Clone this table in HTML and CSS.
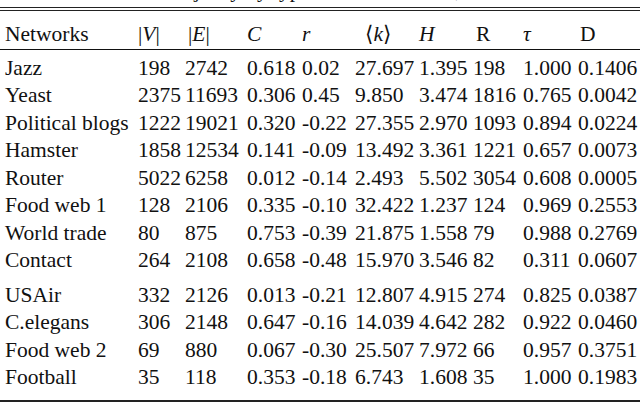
FILE: index.html
```html
<!DOCTYPE html>
<html>
<head>
<meta charset="utf-8">
<title>Networks</title>
<link rel="stylesheet" href="styles.css">
</head>
<body>
	<div class="caption"><p>Table 1: Basic majority by type of real networks, as used in the tests</p></div>
	<div class="toprule"></div>
	<table class="stats">
		<colgroup>
			<col class="c1"><col class="c2"><col class="c3"><col class="c4"><col class="c5">
			<col class="c6"><col class="c7"><col class="c8"><col class="c9"><col class="c10">
		</colgroup>
		<thead>
			<tr>
				<th>Networks</th>
				<th>|<i>V</i>|</th>
				<th class="e">|<i>E</i>|</th>
				<th><i>C</i></th>
				<th><i>r</i></th>
				<th class="k">&#10216;<i>k</i>&#10217;</th>
				<th><i>H</i></th>
				<th class="rr">R</th>
				<th><i>&tau;</i></th>
				<th class="d">D</th>
			</tr>
		</thead>
		<tbody class="grp1">
			<tr><td>Jazz</td><td>198</td><td>2742</td><td>0.618</td><td>0.02</td><td>27.697</td><td>1.395</td><td>198</td><td>1.000</td><td>0.1406</td></tr>
			<tr><td>Yeast</td><td>2375</td><td>11693</td><td>0.306</td><td>0.45</td><td>9.850</td><td>3.474</td><td>1816</td><td>0.765</td><td>0.0042</td></tr>
			<tr><td>Political blogs</td><td>1222</td><td>19021</td><td>0.320</td><td>-0.22</td><td>27.355</td><td>2.970</td><td>1093</td><td>0.894</td><td>0.0224</td></tr>
			<tr><td>Hamster</td><td>1858</td><td>12534</td><td>0.141</td><td>-0.09</td><td>13.492</td><td>3.361</td><td>1221</td><td>0.657</td><td>0.0073</td></tr>
			<tr><td>Router</td><td>5022</td><td>6258</td><td>0.012</td><td>-0.14</td><td>2.493</td><td>5.502</td><td>3054</td><td>0.608</td><td>0.0005</td></tr>
			<tr><td>Food web 1</td><td>128</td><td>2106</td><td>0.335</td><td>-0.10</td><td>32.422</td><td>1.237</td><td>124</td><td>0.969</td><td>0.2553</td></tr>
			<tr><td>World trade</td><td>80</td><td>875</td><td>0.753</td><td>-0.39</td><td>21.875</td><td>1.558</td><td>79</td><td>0.988</td><td>0.2769</td></tr>
			<tr><td>Contact</td><td>264</td><td>2108</td><td>0.658</td><td>-0.48</td><td>15.970</td><td>3.546</td><td>82</td><td>0.311</td><td>0.0607</td></tr>
		</tbody>
		<tbody class="grp2">
			<tr><td>USAir</td><td>332</td><td>2126</td><td>0.013</td><td>-0.21</td><td>12.807</td><td>4.915</td><td>274</td><td>0.825</td><td>0.0387</td></tr>
			<tr><td>C.elegans</td><td>306</td><td>2148</td><td>0.647</td><td>-0.16</td><td>14.039</td><td>4.642</td><td>282</td><td>0.922</td><td>0.0460</td></tr>
			<tr><td>Food web 2</td><td>69</td><td>880</td><td>0.067</td><td>-0.30</td><td>25.507</td><td>7.972</td><td>66</td><td>0.957</td><td>0.3751</td></tr>
			<tr><td>Football</td><td>35</td><td>118</td><td>0.353</td><td>-0.18</td><td>6.743</td><td>1.608</td><td>35</td><td>1.000</td><td>0.1983</td></tr>
		</tbody>
	</table>
</body>
</html>
```
FILE: styles.css
```css
*{margin:0; padding:0;}
html,body{background:#fff;}
body{width:640px; height:402px; overflow:hidden; color:#111; font-family:"Liberation Serif","DejaVu Serif",serif; font-size:21.5px;}

/*caption, only the tails of its letters show*/
.caption{height:5px; overflow:hidden;}
.caption p{margin-top:-22.5px; line-height:24px; padding-left:40px; white-space:nowrap;}

.toprule{height:2px; margin-top:2px; border-top:1px solid #222; border-bottom:1px solid #222;}

.stats{width:640px; border-collapse:collapse; table-layout:fixed;}
.stats .c1{width:138px;}
.stats .c2{width:47px;}
.stats .c3{width:62px;}
.stats .c4{width:55px;}
.stats .c5{width:53px;}
.stats .c6{width:64px;}
.stats .c7{width:54px;}
.stats .c8{width:50px;}
.stats .c9{width:55px;}
.stats .c10{width:62px;}

.stats th, .stats td{text-align:left; font-weight:normal; white-space:nowrap; line-height:27.5px; height:27.5px; vertical-align:middle;}
.stats th:first-child, .stats td:first-child{padding-left:5px;}

.stats thead th{padding-top:10px; border-bottom:1px solid #111;}
.stats thead th.e{padding-left:3px;}
.stats thead th.k{padding-left:10px;}
.stats thead th.rr{padding-left:3px;}
.stats thead th.d{padding-left:2px;}

.stats .grp1 tr:first-child td{padding-top:5px;}
.stats .grp2 tr:first-child td{padding-top:7px;}
.stats .grp2 tr:last-child td{padding-bottom:8px; border-bottom:2px solid #222;}
```
